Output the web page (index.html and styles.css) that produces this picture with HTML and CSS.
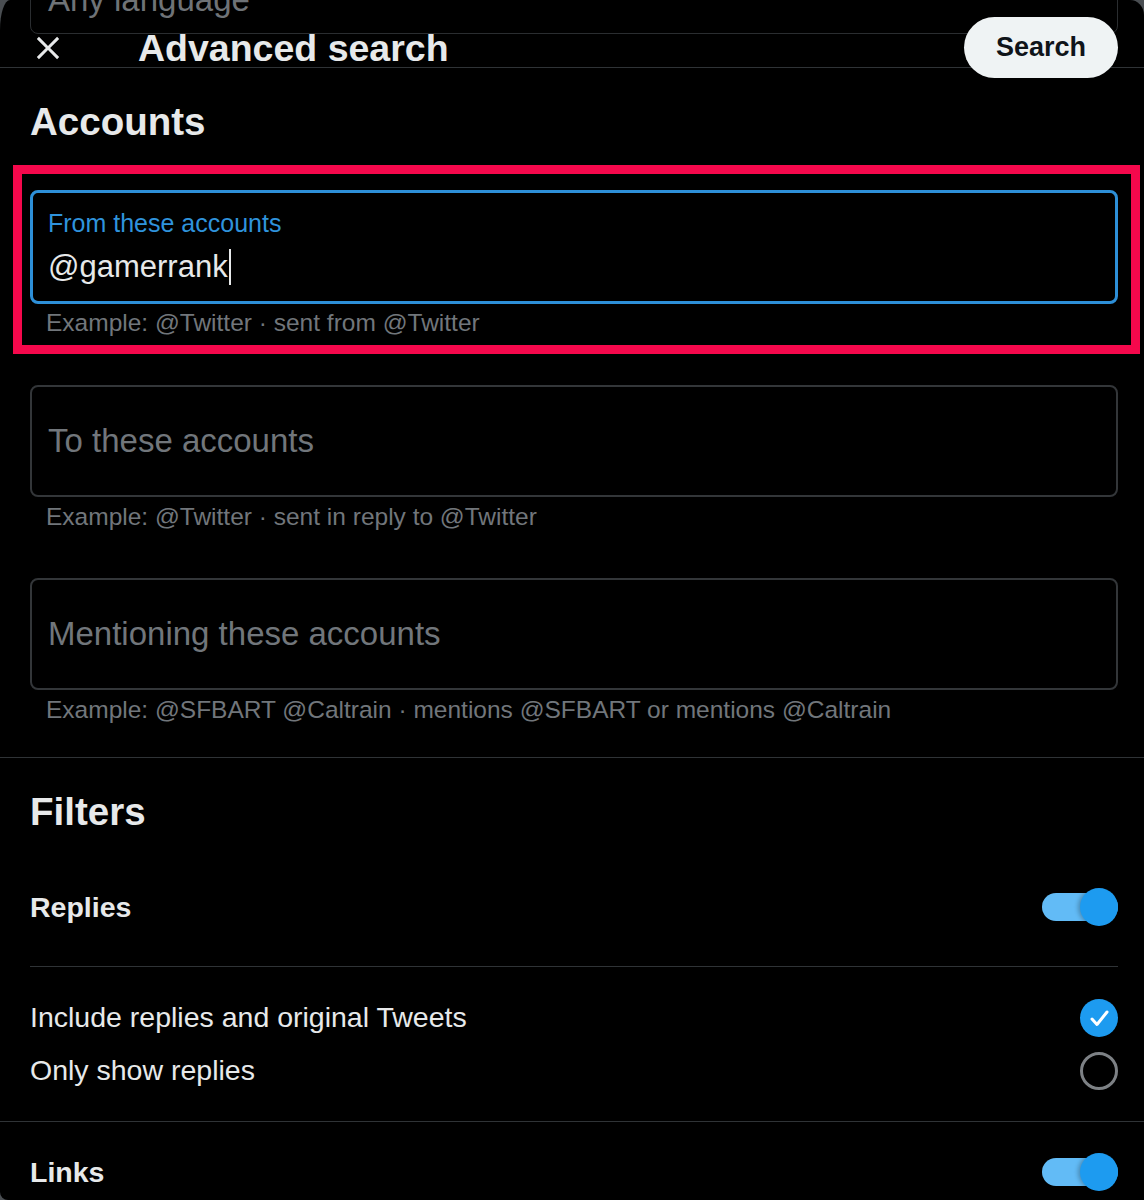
FILE: index.html
```html
<!DOCTYPE html>
<html lang="en">

<head>
  <meta charset="UTF-8">
  <meta name="viewport" content="width=device-width, initial-scale=1.0">
  <title>Advanced search</title>
  <link rel="stylesheet" href="styles.css">
</head>

<body>
  <div id="modal">
    <!-- the language select, scrolled up under the header -->
    <div class="peek">
      <div class="ghost">Any language</div>
    </div>

    <div class="topbar">
      <span class="close">
        <svg viewBox="0 0 24 24" width="36" height="36">
          <path d="M10.59 12L4.54 5.96l1.42-1.42L12 10.59l6.04-6.05 1.42 1.42L13.41 12l6.05 6.04-1.42 1.42L12 13.41l-6.04 6.05-1.42-1.42L10.59 12z" fill="#e7e9ea"></path>
        </svg>
      </span>
      <h1 class="title">Advanced search</h1>
      <span class="search-btn">Search</span>
    </div>

    <div class="group">
      <h2 class="heading">Accounts</h2>

      <div class="highlight">
        <div class="field focused">
          <div class="label">From these accounts</div>
          <div class="value">@gamerrank<span class="caret"></span></div>
        </div>
        <div class="hint">Example: @Twitter · sent from @Twitter</div>
      </div>

      <div class="field first">To these accounts</div>
      <div class="hint">Example: @Twitter · sent in reply to @Twitter</div>

      <div class="field second">Mentioning these accounts</div>
      <div class="hint">Example: @SFBART @Caltrain · mentions @SFBART or mentions @Caltrain</div>
    </div>

    <div class="group filters">
      <h2 class="heading">Filters</h2>

      <div class="row row-top">
        <span class="row-title">Replies</span>
        <span class="toggle"><span class="knob"></span></span>
      </div>

      <ul class="options">
        <li class="row">
          <span>Include replies and original Tweets</span>
          <span class="check">
            <svg viewBox="0 0 38 38" width="38" height="38">
              <polyline points="12,20 17,25.5 27,13" fill="none" stroke="#fff" stroke-width="3" stroke-linecap="round" stroke-linejoin="round"></polyline>
            </svg>
          </span>
        </li>
        <li class="row">
          <span>Only show replies</span>
          <span class="radio"></span>
        </li>
      </ul>
    </div>

    <div class="row row-links">
      <span class="row-title">Links</span>
      <span class="toggle"><span class="knob"></span></span>
    </div>
  </div>
</body>

</html>
```

FILE: styles.css
```css
* {
  margin: 0;
  padding: 0;
  box-sizing: border-box;
}

html {
  background-color: #4a4e52;
}

body {
  font-family: "Liberation Sans", Arial, sans-serif;
  color: #e7e9ea;
}

li {
  list-style: none;
}

#modal {
  height: 1200px;
  overflow: hidden;
  background-color: #000;
  border-radius: 10px 14px 0 8px / 30px 15px 0 8px;
}

/* top: select box cut off by the header */
.peek {
  height: 34px;
  overflow: hidden;
  padding: 0 26px 0 30px;
}

.ghost {
  display: flex;
  align-items: flex-end;
  height: 112px;
  margin-top: -78px;
  padding: 0 17px 13px;
  border: 1px solid #2a2d30;
  border-radius: 8px;
  font-size: 33px;
  line-height: 40px;
  color: #6f7377;
}

.topbar {
  display: flex;
  align-items: center;
  height: 34px;
  padding: 0 26px 0 30px;
  border-bottom: 1px solid #2f3336;
}

.close {
  display: flex;
  margin-bottom: 6px;
}

.title {
  margin-left: 72px;
  margin-bottom: 6px;
  font-size: 37.5px;
  line-height: 44px;
  font-weight: bold;
}

.search-btn {
  display: flex;
  align-items: center;
  justify-content: center;
  width: 154px;
  height: 61px;
  margin-left: auto;
  margin-bottom: 6px;
  border-radius: 31px;
  background-color: #eff3f4;
  color: #0f1419;
  font-size: 27px;
  font-weight: bold;
}

/* sections */
.group {
  padding: 0 26px 32px 30px;
  border-bottom: 1px solid #2f3336;
}

.group.filters {
  padding-bottom: 24px;
}

.heading {
  margin-top: 31px;
  font-size: 38.5px;
  line-height: 46px;
  font-weight: bold;
}

.highlight {
  margin: 20px -22px 0 -17px;
  padding: 16px 13px 7px 8px;
  border: 9px solid #f5084c;
}

.field {
  display: flex;
  align-items: center;
  height: 112px;
  padding: 0 16px;
  border: 2px solid #333639;
  border-radius: 8px;
  font-size: 33px;
  color: #71767b;
}

.field.first {
  margin-top: 31px;
}

.field.second {
  margin-top: 46px;
}

.field.focused {
  display: block;
  height: 114px;
  padding: 15px 15px 0;
  border: 3px solid #2d8fd8;
}

.label {
  font-size: 25px;
  line-height: 30px;
  color: #2f93dc;
}

.value {
  display: flex;
  align-items: center;
  margin-top: 9px;
  font-size: 31px;
  line-height: 40px;
  color: #e7e9ea;
}

.caret {
  width: 2px;
  height: 36px;
  margin-left: 1px;
  background-color: #e7e9ea;
}

.hint {
  margin-top: 5px;
  padding-left: 16px;
  font-size: 24.5px;
  line-height: 30px;
  color: #71767b;
}

.highlight .hint {
  margin-top: 4px;
}

/* filter rows */
.row {
  display: flex;
  align-items: center;
  justify-content: space-between;
  height: 53px;
  font-size: 28.5px;
}

.row-top {
  height: 56px;
  margin-top: 44px;
}

.row-title {
  font-weight: bold;
}

.options {
  margin-top: 31px;
  padding-top: 24px;
  border-top: 1px solid #2f3336;
}

.row-links {
  height: 56px;
  margin: 22px 26px 0 30px;
}

.toggle {
  display: flex;
  align-items: center;
  justify-content: flex-end;
  width: 76px;
  height: 28px;
  border-radius: 14px;
  background-color: #62bbf6;
}

.knob {
  flex-shrink: 0;
  width: 38px;
  height: 38px;
  border-radius: 50%;
  background-color: #1d9bf0;
  box-shadow: -2px 0 4px rgba(0, 0, 0, 0.25);
}

.check {
  display: flex;
  width: 38px;
  height: 38px;
  border-radius: 50%;
  background-color: #1d9bf0;
}

.radio {
  width: 38px;
  height: 38px;
  border: 3px solid #7d8185;
  border-radius: 50%;
}
```
